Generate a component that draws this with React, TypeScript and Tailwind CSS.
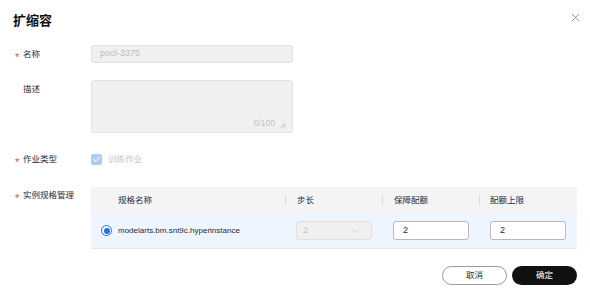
import { X, ChevronDown, Check } from "lucide-react";

const font = { fontFamily: '"Liberation Sans", "Noto Sans CJK SC", sans-serif' };

function Label({ text, required }: { text: string; required?: boolean }) {
  return (
    <div className="w-[91px] shrink-0 flex items-center pl-[15px] text-[8.5px] text-[#252b3a] leading-[12px] h-[12px]">
      <span className="w-[8px] h-[12px] text-[#e84a4a] text-[11px] leading-[12px] translate-y-[3px]">{required ? "*" : ""}</span>
      <span>{text}</span>
    </div>
  );
}

export default function App() {
  return (
    <div className="w-[590px] h-[295px] bg-white relative overflow-hidden" style={font}>
      <div className="flex items-center justify-between pl-[13px] pr-[8px] pt-[11px] h-[31px]">
        <h1 className="text-[13px] font-bold text-[#111] leading-[20px]">扩缩容</h1>
        <X size={13} strokeWidth={1.3} className="text-[#666] -mt-[8px]" />
      </div>

      <div className="flex mt-[14px]">
        <div className="pt-[3px]"><Label text="名称" required /></div>
        <div className="w-[202px] h-[18px] rounded-[3px] border border-[#e2e2e2] bg-[#f0f0f0] flex items-center px-[8px] text-[9px] text-[#bdbdbd]">
          pool-3375
        </div>
      </div>

      <div className="flex mt-[17px]">
        <div className="pt-[3px]"><Label text="描述" /></div>
        <div className="w-[202px] h-[53px] rounded-[3px] border border-[#e2e2e2] bg-[#f0f0f0] flex items-end justify-end pr-[6px] pb-[2px] gap-[5px] text-[8.5px] text-[#c2c2c2]">
          <span>0/100</span>
          <svg width="6" height="6" viewBox="0 0 6 6" className="mb-[2px]">
            <path d="M5.5 1 L1 5.5 M5.5 3.5 L3.5 5.5" stroke="#a8a8a8" strokeWidth="0.8" />
          </svg>
        </div>
      </div>

      <div className="flex mt-[20px] items-center">
        <Label text="作业类型" required />
        <div className="flex items-center gap-[6px]">
          <div className="w-[11px] h-[11px] rounded-[2px] bg-[#a9cdf7] flex items-center justify-center">
            <Check size={9} strokeWidth={2.5} className="text-white" />
          </div>
          <span className="text-[8.5px] text-[#c6c6c6]">训练作业</span>
        </div>
      </div>

      <div className="flex mt-[21px]">
        <div className="pt-[2px]"><Label text="实例规格管理" required /></div>
        <div className="w-[486px] text-[8.5px] text-[#252b3a]">
          <div className="h-[27px] bg-[#f4f4f4] flex items-center">
            <div className="w-[194px] pl-[27px]">规格名称</div>
            <div className="w-[97px] flex items-center">
              <span className="w-px h-[10px] bg-[#dcdcdc] mr-[11px]" />步长
            </div>
            <div className="w-[97px] flex items-center">
              <span className="w-px h-[10px] bg-[#dcdcdc] mr-[11px]" />保障配额
            </div>
            <div className="flex items-center">
              <span className="w-px h-[10px] bg-[#dcdcdc] mr-[10px]" />配额上限
            </div>
          </div>
          <div className="h-[35px] bg-[#eef5ff] border-b border-[#e3e8ef] flex items-center">
            <div className="w-[205px] flex items-center pl-[10px] gap-[6px]">
              <span className="w-[11px] h-[11px] rounded-full border border-[#1f6ff0] bg-white flex items-center justify-center">
                <span className="w-[6px] h-[6px] rounded-full bg-[#1f6ff0]" />
              </span>
              <span className="text-[8px]">modelarts.bm.snt9c.hyperinstance</span>
            </div>
            <div className="w-[97px]">
              <div className="w-[76px] h-[19px] rounded-[3px] border border-[#e0e0e0] bg-[#f0f0f0] flex items-center justify-between px-[6px] text-[9px] text-[#c2c2c2]">
                <span>2</span>
                <ChevronDown size={10} strokeWidth={1.2} className="text-[#bbb] mr-[5px]" />
              </div>
            </div>
            <div className="w-[97px]">
              <div className="w-[76px] h-[19px] rounded-[3px] border border-[#b8b8b8] bg-white flex items-center px-[9px] text-[9px]">2</div>
            </div>
            <div>
              <div className="w-[76px] h-[19px] rounded-[3px] border border-[#b8b8b8] bg-white flex items-center px-[9px] text-[9px]">2</div>
            </div>
          </div>
        </div>
      </div>

      <div className="flex justify-end gap-[5px] pr-[13px] mt-[17px]">
        <button className="w-[65px] h-[19px] rounded-full border border-[#9c9c9c] bg-white text-[8.5px] text-[#252b3a]">取消</button>
        <button className="w-[65px] h-[19px] rounded-full bg-[#111] text-[8.5px] text-white">确定</button>
      </div>
    </div>
  );
}
